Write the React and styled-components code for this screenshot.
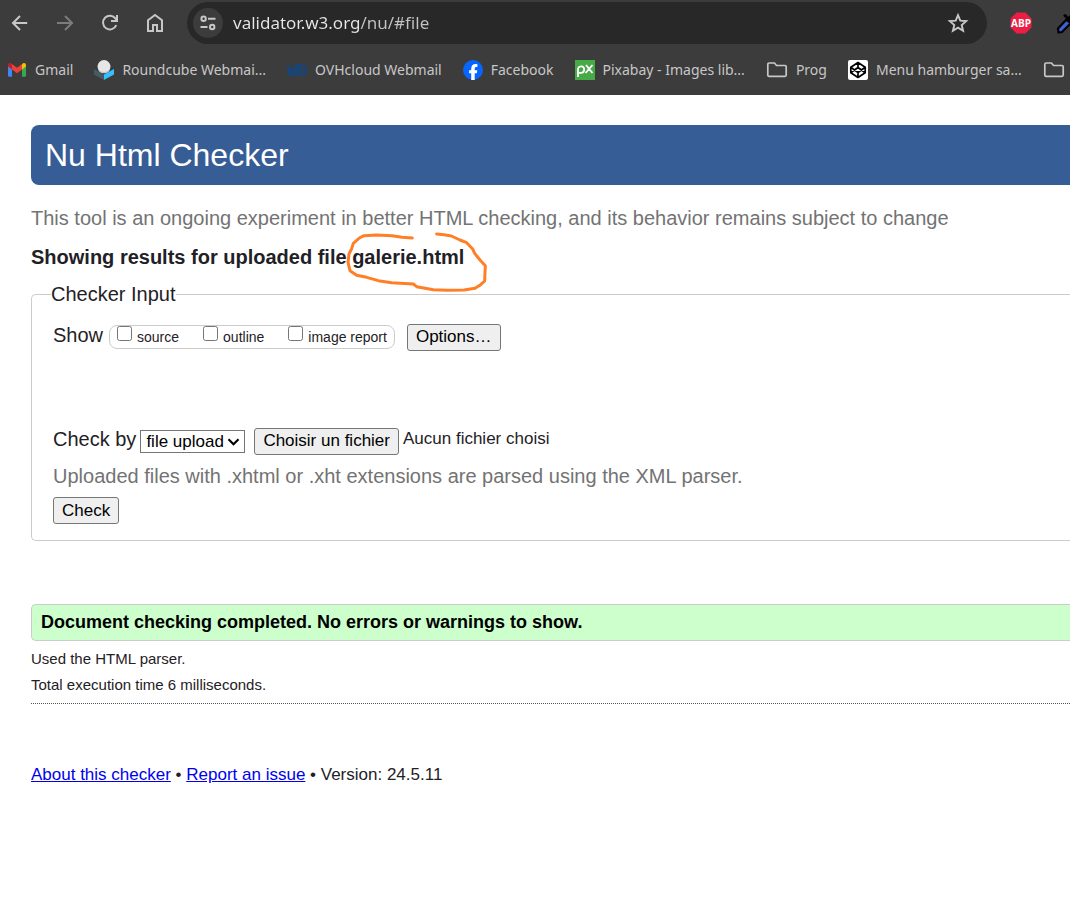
import React, { useRef } from "react";
import styled, { createGlobalStyle } from "styled-components";

const GlobalStyle = createGlobalStyle`
  * { box-sizing: border-box; }
  html { overflow-x: hidden; }
  body {
    margin: 0;
    background: #fff;
    color: #1f2126;
    font-family: "Liberation Sans", Arial, sans-serif;
  }
  button, input, select { font-family: inherit; }
`;

/* ---------- browser chrome ---------- */

const Browser = styled.header`
  background: #3c3c3c;
  color: #c7c7c7;
  font-family: "Noto Sans", "Segoe UI", sans-serif;
  height: 95px;
  overflow: hidden;
`;

const Toolbar = styled.div`
  display: flex;
  align-items: center;
  height: 46px;
  padding: 2px 0 2px 8px;
`;

const NavButtons = styled.nav`
  display: flex;
  gap: 21px;
  margin-right: 20px;
`;

const IconButton = styled.button`
  display: flex;
  flex: none;
  align-items: center;
  justify-content: center;
  width: ${(p) => p.$size || 24}px;
  height: ${(p) => p.$size || 24}px;
  padding: 0;
  border: 0;
  border-radius: 50%;
  background: ${(p) => (p.$filled ? "#3c3c3c" : "transparent")};
  color: ${(p) => (p.$dim ? "#7c7c7c" : "#c7c7c7")};
`;

const Omnibox = styled.div`
  display: flex;
  flex: 1;
  align-items: center;
  height: 42px;
  padding: 0 17px 0 6px;
  border-radius: 21px;
  background: #282828;
`;

const Address = styled.input`
  flex: 1;
  min-width: 0;
  margin: 0 10px;
  padding: 0;
  border: 0;
  outline: 0;
  color: #e3e3e3;
  font-size: 17px;
  line-height: 24px;
  background: linear-gradient(90deg, #e8e8e8 128px, #c4c4c4 128px);
  background-clip: text;
  -webkit-text-fill-color: transparent;
`;

const Extensions = styled.div`
  display: flex;
  flex: none;
  align-items: center;
  gap: 22px;
  width: 83px;
  padding-left: 22px;
  overflow: hidden;
`;

const Bookmarks = styled.nav`
  display: flex;
  align-items: center;
  gap: 21px;
  height: 48px;
  padding-left: 7px;
`;

const Bookmark = styled.a`
  display: flex;
  flex: none;
  align-items: center;
  gap: 8px;
  color: #c7c7c7;
  font-size: 14px;
  line-height: 20px;
  text-decoration: none;
  white-space: nowrap;
`;

const stroke = { fill: "none", stroke: "currentColor" };

const BackIcon = () => (
  <svg width="24" height="24" viewBox="0 0 24 24" {...stroke} strokeWidth="2">
    <path d="M19.2 12H5.4M12 5l-7 7 7 7" />
  </svg>
);
const ForwardIcon = () => (
  <svg width="24" height="24" viewBox="0 0 24 24" {...stroke} strokeWidth="2">
    <path d="M4 12h14.6M12 5l7 7-7 7" />
  </svg>
);
const ReloadIcon = () => (
  <svg width="24" height="24" viewBox="0 0 24 24" {...stroke} strokeWidth="2">
    <path d="M18.3 14.2A6.9 6.9 0 1 1 17.6 7.6L19 9.4" />
    <path d="M19 4v6h-6" />
  </svg>
);
const HomeIcon = () => (
  <svg width="24" height="24" viewBox="0 0 24 24" {...stroke} strokeWidth="2">
    <path d="M5 9.3 12 4l7 5.3V20h-5v-6h-4v6H5z" />
  </svg>
);
const TuneIcon = () => (
  <svg width="18" height="18" viewBox="0 0 18 18" {...stroke} strokeWidth="2">
    <circle cx="4.6" cy="4.8" r="2.2" />
    <path d="M9 4.8h7.5M1.500 13h7" />
    <circle cx="13.2" cy="13" r="2.2" />
  </svg>
);
const StarIcon = () => (
  <svg width="24" height="24" viewBox="0 0 24 24" {...stroke} strokeWidth="1.9">
    <path d="M12 4.2l2.3 5.4 5.9.5-4.5 3.9 1.4 5.7-5.1-3.1-5.1 3.1 1.4-5.7-4.5-3.9 5.9-.5z" />
  </svg>
);
const AbpIcon = () => (
  <svg width="24" height="24" viewBox="0 0 24 24">
    <path d="M7.600 1.500h8.800l6.100 6.100v8.800l-6.100 6.100H7.600l-6.100-6.100V7.600z" fill="#ed1e45" />
    <text x="12" y="16" textAnchor="middle" fontSize="10" fontWeight="700" fill="#fff" fontFamily="Open Sans, sans-serif">ABP</text>
  </svg>
);
const DropperIcon = () => (
  <svg width="24" height="24" viewBox="0 0 24 24">
    <path d="M3.500 21.500 3 17.500 11.500 8.500l4 4L7 21z" fill="#3f5fd8" stroke="#000" strokeWidth="2.200" strokeLinejoin="round" />
    <path d="M10 4.500l9 9M13.500 8l4.500-5 4 4-5 5z" fill="#000" stroke="#000" strokeWidth="3" strokeLinecap="round" />
  </svg>
);
const GmailIcon = () => (
  <svg width="20" height="20" viewBox="0 0 20 20">
    <path d="M1 5.500V15.500a1.200 1.200 0 0 0 1.200 1.200H5V9z" fill="#4285f4" />
    <path d="M15 9v7.700h2.800A1.200 1.200 0 0 0 19 15.500V5.500z" fill="#34a853" />
    <path d="M15 4.500V9.500l4-3V5c0-2-2-2.500-3.200-1.600z" fill="#fbbc04" />
    <path d="M5 9.500v-5.500L10 7.800l5-3.800v5.500L10 13.300z" fill="#ea4335" />
    <path d="M1 5v1.500l4 3V4.200l-.8-.8C3 2.500 1 3 1 5z" fill="#c5221f" />
  </svg>
);
const RoundcubeIcon = () => (
  <svg width="20" height="20" viewBox="0 0 20 20">
    <path d="M0 9l4-2.500h12L20 9l-10 5.500z" fill="#2e4048" />
    <path d="M0 9l10 5.500V20L0 14.500z" fill="#465a64" />
    <path d="M20 9l-10 5.500V20l10-5.500z" fill="#37beff" />
    <circle cx="10" cy="6.600" r="6.500" fill="#e6e6e6" />
    <path d="M4 9.300a6.500 6.500 0 0 0 12 0 8 8 0 0 1-12 0z" fill="#c9c9c9" />
  </svg>
);
const OvhIcon = () => (
  <svg width="20" height="20" viewBox="0 0 20 20" fill="#1a4474">
    <path d="M1.300 4C-.6 8-.4 12.500 2.200 16H8l5-12H8.300L5.800 9.800z" />
    <path d="M18.700 4C20.600 8 20.400 12.500 17.800 16H12.500L18.700 4zM13.200 4h4L11 16H8z" />
  </svg>
);
const FacebookIcon = () => (
  <svg width="20" height="20" viewBox="0 0 20 20">
    <circle cx="10" cy="10" r="10" fill="#0866ff" />
    <path d="M8.200 20v-6.700H6.100v-3h2.100V9c0-3.300 1.500-4.900 4.500-4.900.6 0 1.300.1 1.700.2V7c-2-.2-2.700 0-2.700 1.800v1.500h2.600l-.5 3h-2.100V20z" fill="#fff" />
  </svg>
);
const PixabayIcon = () => (
  <svg width="20" height="20" viewBox="0 0 20 20">
    <path d="M0 0h20v20H0z" fill="#48a947" />
    <path d="M3 17V8.500a3.200 3.200 0 1 1 3.200 4.300H4M11 5l6.500 8M17.500 5L10.500 13" fill="none" stroke="#fff" strokeWidth="1.800" />
  </svg>
);
const FolderIcon = () => (
  <svg width="22" height="20" viewBox="0 0 22 20" {...stroke} strokeWidth="1.700">
    <path d="M3 3h5.500l2 2.500H19c.8 0 1.200.5 1.200 1.200V15c0 .8-.4 1.300-1.200 1.300H3c-.8 0-1.200-.5-1.200-1.300V4.300C1.800 3.500 2.200 3 3 3z" />
  </svg>
);
const CodepenIcon = () => (
  <svg width="20" height="20" viewBox="0 0 20 20">
    <rect width="20" height="20" rx="2" fill="#fff" />
    <path d="M10 2.500l7.200 4.800v5.400L10 17.500l-7.200-4.800V7.300zM10 2.500v4.700M10 12.800v4.700M2.800 7.300L10 12.500l7.200-5.200M2.800 12.700L10 7.500l7.200 5.200" fill="none" stroke="#000" strokeWidth="1.700" strokeLinejoin="round" />
  </svg>
);

const bookmarks = [
  { icon: GmailIcon, text: "Gmail" },
  { icon: RoundcubeIcon, text: "Roundcube Webmai..." },
  { icon: OvhIcon, text: "OVHcloud Webmail" },
  { icon: FacebookIcon, text: "Facebook" },
  { icon: PixabayIcon, text: "Pixabay - Images lib..." },
  { icon: FolderIcon, text: "Prog" },
  { icon: CodepenIcon, text: "Menu hamburger sa..." },
  { icon: FolderIcon, text: "" },
];

/* ---------- checker page ---------- */

const Page = styled.main`
  padding: 30px 0 0 31px;
`;

const Banner = styled.h1`
  margin: 0 0 20px;
  padding: 0 14px;
  border-radius: 8px 0 0 8px;
  background: #365d95;
  color: #fff;
  font-size: 32px;
  font-weight: 400;
  line-height: 60px;
`;

const Note = styled.p`
  margin: 0;
  color: #737373;
  font-size: 20px;
  line-height: 26px;
`;

const ResultTitle = styled.h2`
  margin: 14px 0 12px;
  font-size: 20px;
  font-weight: 700;
  line-height: 24px;
`;

const FileName = styled.span`
  position: relative;
`;

const Circled = styled.svg`
  position: absolute;
  left: -6px;
  top: -14px;
  width: 142px;
  height: 60px;
  overflow: visible;
  pointer-events: none;
`;

const Fieldset = styled.fieldset`
  min-width: 0;
  margin: 0;
  padding: 16px 0 16px 21px;
  border: 1px solid #ccc;
  border-right: 0;
  border-radius: 5px 0 0 5px;
`;

const Legend = styled.legend`
  margin-left: -2px;
  padding: 0;
  font-size: 20px;
  line-height: 26px;
`;

const Row = styled.div`
  display: flex;
  align-items: center;
  height: 28px;
`;

const RowLabel = styled.label`
  align-self: flex-start;
  font-size: 20px;
  line-height: 24px;
`;

const ShowGroup = styled.div`
  display: flex;
  align-items: center;
  gap: 24px;
  height: 24px;
  margin: 0 12px 0 6px;
  padding: 0 7px;
  border: 1px solid #ccc;
  border-radius: 8px;
`;

const ShowOption = styled.label`
  display: flex;
  gap: 5px;
  font-size: 14px;
  line-height: 22px;
`;

const Tick = styled.input`
  width: 15px;
  height: 15px;
  margin: 0;
`;

const Button = styled.button`
  height: 27px;
  padding: 0 8px;
  border: 1px solid #767676;
  border-radius: 3px;
  background: #efefef;
  color: #000;
  font-size: 17px;
  line-height: 24px;
`;

const MethodBox = styled.span`
  position: relative;
  display: flex;
  width: 105px;
  margin: 0 9px 0 4px;
`;

const Method = styled.select`
  appearance: none;
  width: 100%;
  height: 23px;
  padding: 0 0 0 5px;
  border: 1px solid #767676;
  border-radius: 0;
  background: #fff;
  color: #000;
  font-size: 17px;
`;

const Chevron = styled.svg`
  position: absolute;
  right: 5px;
  top: 8px;
  pointer-events: none;
`;

const FileStatus = styled.span`
  margin-left: 4px;
  font-size: 17px;
  line-height: 24px;
  align-self: flex-start;
`;

const CheckBy = styled(Row)`
  margin-top: 76px;
`;

const Hint = styled(Note)`
  margin: 8px 0;
`;

const Success = styled.p`
  margin: 63px 0 5px;
  padding: 0 9px;
  border: 1px solid #ccc;
  border-right: 0;
  border-radius: 5px 0 0 5px;
  background: #cfc;
  color: #000;
  font-size: 18px;
  font-weight: 700;
  line-height: 35px;
`;

const Detail = styled.p`
  margin: 0;
  font-size: 15px;
  line-height: 26px;
`;

const Rule = styled.hr`
  margin: 5px 0 58px;
  border: 0;
  border-top: 1px dotted #555;
`;

const Footer = styled.footer`
  font-size: 17px;
  line-height: 26px;
`;

const Link = styled.a`
  color: #00e;
`;

export default function App() {
  const fileInput = useRef(null);
  return (
    <>
      <GlobalStyle />
      <Browser>
        <Toolbar>
          <NavButtons>
            <IconButton aria-label="Back"><BackIcon /></IconButton>
            <IconButton aria-label="Forward" $dim><ForwardIcon /></IconButton>
            <IconButton aria-label="Reload"><ReloadIcon /></IconButton>
            <IconButton aria-label="Home"><HomeIcon /></IconButton>
          </NavButtons>
          <Omnibox>
            <IconButton aria-label="Site information" $size={30} $filled><TuneIcon /></IconButton>
            <Address aria-label="Address" defaultValue="validator.w3.org/nu/#file" spellCheck={false} />
            <IconButton aria-label="Bookmark this page"><StarIcon /></IconButton>
          </Omnibox>
          <Extensions>
            <IconButton aria-label="Adblock Plus"><AbpIcon /></IconButton>
            <IconButton aria-label="Color picker"><DropperIcon /></IconButton>
          </Extensions>
        </Toolbar>
        <Bookmarks>
          {bookmarks.map(({ icon: Icon, text }, i) => (
            <Bookmark href="#file" key={i} aria-label={text || "Folder"}>
              <Icon />
              {text && <span>{text}</span>}
            </Bookmark>
          ))}
        </Bookmarks>
      </Browser>

      <Page>
        <Banner>Nu Html Checker</Banner>
        <Note>This tool is an ongoing experiment in better HTML checking, and its behavior remains subject to change</Note>
        <ResultTitle>
          Showing results for uploaded file{" "}
          <FileName>
            galerie.html
            <Circled viewBox="48 34 426 180" aria-hidden="true">
              <path
                d="M247 52L216 50 186 45 140 43 102 45 88 52 70 68 65 84 57 100 54 125 60 150 80 164 110 170 145 180 185 186 250 190 260 198 310 207 350 209 402 208 435 203 452 192 464 181 465 155 466 135 450 118 434 98 428 85 410 66 390 58 364 46 342 42 320 40"
                fill="none"
                stroke="#ff7f27"
                strokeWidth="9"
                strokeLinecap="round"
                strokeLinejoin="round"
              />
            </Circled>
          </FileName>
        </ResultTitle>

        <Fieldset>
          <Legend>Checker Input</Legend>
          <Row>
            <RowLabel as="span" id="show">Show</RowLabel>
            <ShowGroup role="group" aria-labelledby="show">
              {["source", "outline", "image report"].map((name) => (
                <ShowOption key={name}>
                  <Tick type="checkbox" />
                  {name}
                </ShowOption>
              ))}
            </ShowGroup>
            <Button type="button">Options…</Button>
          </Row>
          <CheckBy>
            <RowLabel htmlFor="method">Check by</RowLabel>
            <MethodBox>
              <Method id="method" defaultValue="file">
                <option value="file">file upload</option>
              </Method>
              <Chevron width="13" height="8" viewBox="0 0 13 8" aria-hidden="true">
                <path d="M1.500 1.200l5 5 5-5" fill="none" stroke="#000" strokeWidth="2.200" />
              </Chevron>
            </MethodBox>
            <input ref={fileInput} type="file" hidden aria-label="Choisir un fichier" />
            <Button type="button" onClick={() => fileInput.current.click()}>Choisir un fichier</Button>
            <FileStatus>Aucun fichier choisi</FileStatus>
          </CheckBy>
          <Hint>Uploaded files with .xhtml or .xht extensions are parsed using the XML parser.</Hint>
          <Button type="submit">Check</Button>
        </Fieldset>

        <Success>Document checking completed. No errors or warnings to show.</Success>
        <Detail>Used the HTML parser.</Detail>
        <Detail>Total execution time 6 milliseconds.</Detail>
        <Rule />
        <Footer>
          <Link href="#about">About this checker</Link> • <Link href="#issues">Report an issue</Link> • Version: 24.5.11
        </Footer>
      </Page>
    </>
  );
}
